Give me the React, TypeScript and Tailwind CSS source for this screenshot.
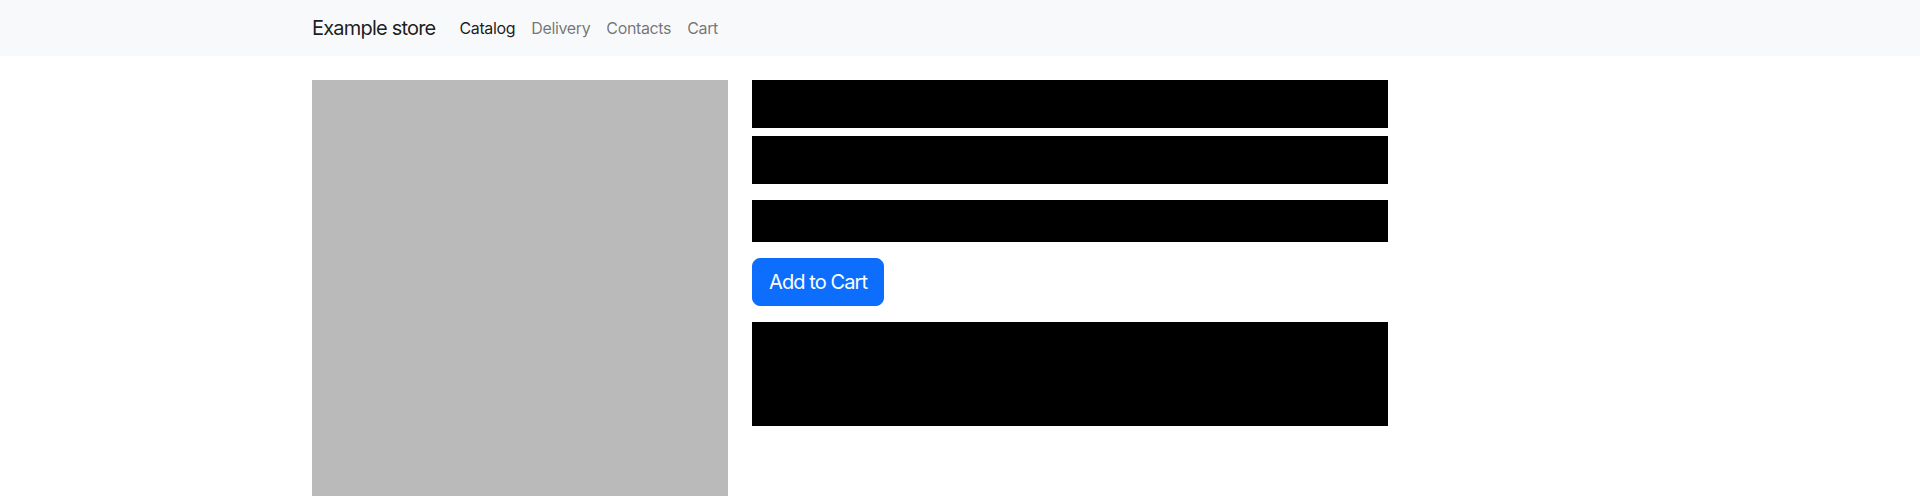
import { useState } from "react";

const links = ["Catalog", "Delivery", "Contacts", "Cart"];

const App = () => {
  const [active] = useState("Catalog");

  return (
    <div className="min-h-screen bg-white font-['Inter','Liberation_Sans',sans-serif] text-[#212529]">
      {/* Navbar */}
      <nav className="bg-[#f8f9fa] py-2">
        <div className="mx-auto flex max-w-[1320px] items-center px-3">
          <a href="#" className="mr-4 py-[5px] text-[20px] leading-[30px] tracking-[-0.04em] text-black/90">
            Example store
          </a>
          <ul className="flex tracking-[-0.022em]">
            {links.map((l) => (
              <li key={l}>
                <a
                  href="#"
                  className={
                    l === active
                      ? "block px-2 py-2 text-base leading-6 text-black/90"
                      : "block px-2 py-2 text-base leading-6 text-black/55"
                  }
                >
                  {l}
                </a>
              </li>
            ))}
          </ul>
        </div>
      </nav>

      {/* Product */}
      <main className="mx-auto mt-6 flex max-w-[1320px] gap-6 px-3">
        <div className="h-[416px] w-[416px] shrink-0 bg-[#bababa]" />
        <div className="flex w-[636px] flex-col items-start">
          <div className="h-12 w-full bg-black" />
          <div className="mt-2 h-12 w-full bg-black" />
          <div className="mt-4 h-[42px] w-full bg-black" />
          <button className="mt-4 rounded-lg border border-[#0d6efd] bg-[#0d6efd] px-4 py-2 text-[20px] leading-[30px] tracking-[-0.045em] text-white">
            Add to Cart
          </button>
          <div className="mt-4 h-[104px] w-full bg-black" />
        </div>
      </main>
    </div>
  );
};

export default App;
